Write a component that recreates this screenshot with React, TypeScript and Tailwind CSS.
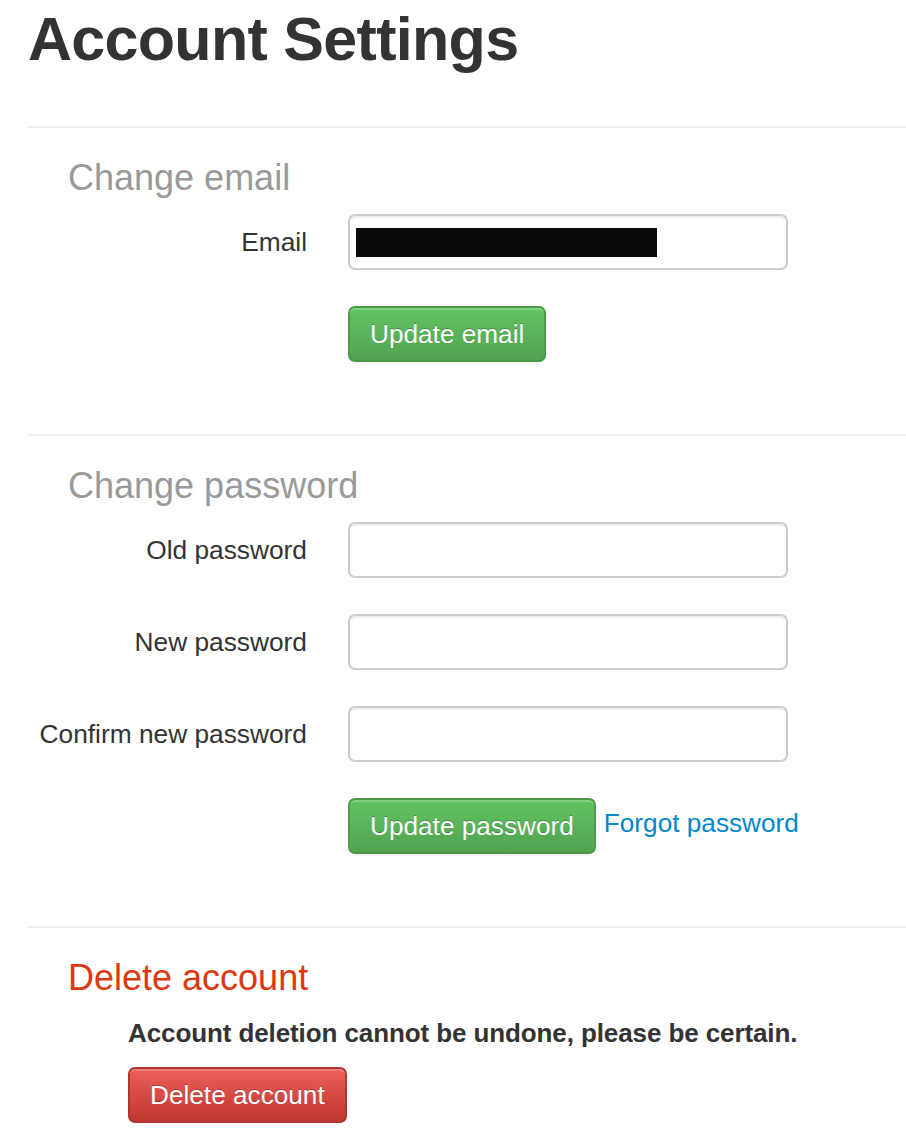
const font = { fontFamily: '"Liberation Sans", Arial, Helvetica, sans-serif' };

function Field({ label, children }: { label: string; children?: React.ReactNode }) {
  return (
    <div className="flex items-center">
      <label className="w-[280px] shrink-0 pr-[1px] text-right text-[26.3px] leading-[30px] text-[#333]">
        {label}
      </label>
      <div className="ml-[40px] flex h-[56px] w-[440px] items-center rounded-[7px] border-2 border-[#ccc] bg-white px-[6px] shadow-[inset_0_2px_2px_rgba(0,0,0,0.075)]">
        {children}
      </div>
    </div>
  );
}

function GreenButton({ children }: { children: React.ReactNode }) {
  return (
    <button className="h-[56px] rounded-[7px] border-2 border-[#4a9a4a] bg-gradient-to-b from-[#62c462] to-[#51a351] px-[20px] text-[26.2px] leading-[30px] text-white [text-shadow:0_-1px_0_rgba(0,0,0,0.25)] shadow-[inset_0_2px_0_rgba(255,255,255,0.2),0_2px_2px_rgba(0,0,0,0.05)]">
      {children}
    </button>
  );
}

function Heading({ children, red }: { children: React.ReactNode; red?: boolean }) {
  return (
    <h3
      className={
        'ml-[40px] mt-[30px] text-[36px] font-normal leading-[40px] ' +
        (red ? 'text-[#dd3811]' : 'text-[#999]')
      }
    >
      {children}
    </h3>
  );
}

function Rule() {
  return <div className="h-[2px] w-full bg-[#eee]" />;
}

export default function App() {
  return (
    <div className="min-h-[1144px] bg-white pl-[28px] text-[#333]" style={font}>
      <h1 className="pt-[8px] text-[61px] font-bold leading-[62px] tracking-[-0.7px] text-[#333]">
        Account Settings
      </h1>

      <div className="mt-[56px]">
        <Rule />
        <Heading>Change email</Heading>
        <div className="mt-[16px]">
          <Field label="Email">
            <div className="h-[29px] w-[301px] bg-[#0a0a0a]" />
          </Field>
        </div>
        <div className="ml-[320px] mt-[36px]">
          <GreenButton>Update email</GreenButton>
        </div>
      </div>

      <div className="mt-[72px]">
        <Rule />
        <Heading>Change password</Heading>
        <div className="mt-[16px] flex flex-col gap-[36px]">
          <Field label="Old password" />
          <Field label="New password" />
          <Field label="Confirm new password" />
        </div>
        <div className="ml-[320px] mt-[36px] flex items-center">
          <GreenButton>Update password</GreenButton>
          <a href="#" className="-mt-[6px] ml-[8px] text-[26.2px] leading-[30px] text-[#0088cc]">
            Forgot password
          </a>
        </div>
      </div>

      <div className="mt-[72px]">
        <Rule />
        <Heading red>Delete account</Heading>
        <div className="ml-[100px] mt-[20px]">
          <p className="text-[26px] font-bold leading-[30px] tracking-[-0.1px] text-[#333]">
            Account deletion cannot be undone, please be certain.
          </p>
          <button className="mt-[19px] h-[56px] rounded-[7px] border-2 border-[#b0352d] bg-gradient-to-b from-[#ee5f5b] to-[#bd362f] px-[20px] text-[26.2px] leading-[30px] text-white [text-shadow:0_-1px_0_rgba(0,0,0,0.25)] shadow-[inset_0_2px_0_rgba(255,255,255,0.2)]">
            Delete account
          </button>
        </div>
      </div>
    </div>
  );
}
